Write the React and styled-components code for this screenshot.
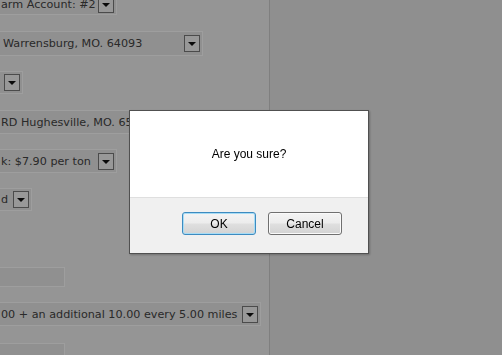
import React from 'react';
import styled, { createGlobalStyle } from 'styled-components';

const GlobalStyle = createGlobalStyle`
  html, body {
    margin: 0;
    padding: 0;
    height: 100%;
    overflow: hidden;
  }
  body {
    background: #e7e7e7;
    font-family: "DejaVu Sans", Verdana, sans-serif;
  }
`;

// the form is scrolled a little to the right, so boxes start off-screen
const fields = [
  { kind: 'select', text: 'arm Account: #2', width: 125, height: 22, mt: -7 },
  { kind: 'select', text: 'Warrensburg, MO. 64093', width: 211, height: 25, mt: 16, pad: 10 },
  { kind: 'select', text: '', width: 31, height: 23, mt: 15 },
  { kind: 'select', text: 'RD Hughesville, MO. 65301', width: 300, height: 24, mt: 16 },
  { kind: 'select', text: 'k: $7.90 per ton', width: 125, height: 24, mt: 15 },
  { kind: 'select', text: 'd', width: 40, height: 23, mt: 15 },
  { kind: 'input', width: 73, height: 20, mt: 56 },
  { kind: 'select', text: '00 + an additional 10.00 every 5.00 miles', width: 269, height: 24, mt: 15 },
  { kind: 'input', width: 73, height: 20, mt: 17 },
];

export default function App() {
  return (
    <>
      <GlobalStyle />
      <Page>
        <FormColumn>
          <Scroller>
            {fields.map((f, i) =>
              f.kind === 'select' ? (
                <Select key={i} $w={f.width} $h={f.height} $mt={f.mt} $pad={f.pad}>
                  <Value>{f.text}</Value>
                  <DropButton>
                    <Arrow />
                  </DropButton>
                </Select>
              ) : (
                <TextBox key={i} $w={f.width} $h={f.height} $mt={f.mt} />
              )
            )}
          </Scroller>
        </FormColumn>
        <Side />
      </Page>

      <Overlay>
        <Dialog>
          <Message>Are you sure?</Message>
          <Footer>
            <Button $primary>OK</Button>
            <Button>Cancel</Button>
          </Footer>
        </Dialog>
      </Overlay>
    </>
  );
}

const Page = styled.div`
  display: flex;
  height: 100vh;
`;

const FormColumn = styled.div`
  width: 269px;
  flex-shrink: 0;
  overflow: hidden;
  background: #f0f0f0;
  border-right: 1px solid #cdcdcd;
`;

const Scroller = styled.div`
  display: flex;
  flex-direction: column;
  align-items: flex-start;
  margin-left: -8px;
`;

const Select = styled.div`
  display: flex;
  align-items: center;
  box-sizing: border-box;
  width: ${p => p.$w}px;
  height: ${p => p.$h}px;
  margin-top: ${p => p.$mt}px;
  padding-left: ${p => p.$pad || 8}px;
  padding-right: 2px;
  border: 1px solid #ffffff;
  background: #e9e9e9;
  flex-shrink: 0;
`;

const Value = styled.span`
  flex: 1;
  min-width: 0;
  overflow: hidden;
  white-space: nowrap;
  font-size: 11.2px;
  color: #444444;
`;

const DropButton = styled.div`
  width: 16px;
  height: 17px;
  box-sizing: border-box;
  border: 1px solid #7a7a7a;
  background: #f6f6f6;
  display: flex;
  align-items: center;
  justify-content: center;
  flex-shrink: 0;
`;

const Arrow = styled.div`
  width: 0;
  height: 0;
  border-left: 4px solid transparent;
  border-right: 4px solid transparent;
  border-top: 4px solid #111;
  margin-top: 1px;
`;

const TextBox = styled.div`
  box-sizing: border-box;
  width: ${p => p.$w}px;
  height: ${p => p.$h}px;
  margin-top: ${p => p.$mt}px;
  border: 1px solid #ffffff;
  background: #e9e9e9;
  flex-shrink: 0;
`;

const Side = styled.div`
  flex: 1;
  background: #e7e7e7;
`;

const Overlay = styled.div`
  position: fixed;
  inset: 0;
  background: rgba(0, 0, 0, 0.38);
  display: flex;
  align-items: flex-start;
  justify-content: flex-start;
  padding: 110px 0 0 129px;
  box-sizing: border-box;
`;

const Dialog = styled.div`
  width: 240px;
  height: 144px;
  box-sizing: border-box;
  border: 1px solid #505050;
  background: #f0f0f0;
  display: flex;
  flex-direction: column;
  font-family: "Liberation Sans", Arial, sans-serif;
  font-size: 12px;
  color: #000;
  box-shadow: 1px 1px 2px rgba(0, 0, 0, 0.25);
`;

const Message = styled.div`
  height: 86px;
  background: #ffffff;
  border-bottom: 1px solid #dfdfdf;
  display: flex;
  align-items: center;
  justify-content: center;
`;

const Footer = styled.div`
  flex: 1;
  display: flex;
  justify-content: flex-end;
  align-items: flex-start;
  gap: 12px;
  padding: 14px 26px 0 0;
`;

const Button = styled.button`
  width: 74px;
  height: 23px;
  box-sizing: border-box;
  padding: 0;
  border: 1px solid ${p => (p.$primary ? '#3d8bc0' : '#707070')};
  border-radius: 3px;
  background: linear-gradient(#f4f4f4 0%, #ececec 48%, #dfdfdf 52%, #d3d3d3 100%);
  box-shadow: inset 0 0 0 1px ${p => (p.$primary ? '#a7dcf5' : '#fafafa')};
  font-family: "Liberation Sans", Arial, sans-serif;
  font-size: 12px;
  color: #000;
  line-height: 20px;
`;
